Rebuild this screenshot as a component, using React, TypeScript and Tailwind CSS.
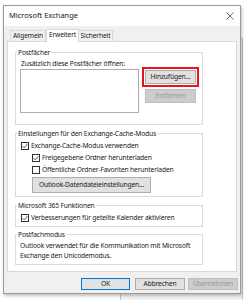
import React from "react";

function Check({ checked }: { checked: boolean }) {
  return (
    <span className="w-[8px] h-[8px] border border-[#333333] bg-white flex items-center justify-center shrink-0">
      {checked && (
        <svg width="6" height="6" viewBox="0 0 6 6">
          <polyline points="0.6,3.2 2.2,4.8 5.4,1" fill="none" stroke="#333333" strokeWidth="0.8" />
        </svg>
      )}
    </span>
  );
}

function Group({ title, className, children }: { title: string; className: string; children?: React.ReactNode }) {
  return (
    <div className={"relative border border-[#dcdcdc] w-[188px] " + className}>
      <span className="absolute left-[1px] top-[-5px] bg-white px-[1px] leading-[9px] whitespace-nowrap">{title}</span>
      {children}
    </div>
  );
}

function Btn({ label, className, disabled }: { label: string; className: string; disabled?: boolean }) {
  return (
    <div
      className={
        "flex items-center justify-center border leading-none whitespace-nowrap " +
        (disabled ? "bg-[#cccccc] border-[#bfbfbf] text-[#9a9a9a] " : "bg-[#e1e1e1] border-[#adadad] ") +
        className
      }
    >
      {label}
    </div>
  );
}

export default function App() {
  return (
    <div className="relative w-[246px] h-[300px] bg-white overflow-hidden font-['Noto_Sans',sans-serif] text-[6.7px] tracking-[-0.15px] text-[#1a1a1a]">
      <div className="absolute left-[120px] top-[38px] w-[123px] h-[270px] border border-[#c4c4c4] bg-[#f4f4f4]" />
      <div className="relative ml-[3px] mt-[5px] w-[238px] h-[289px] border border-[#9a9a9a] bg-[#f0f0f0] flex flex-col shadow-[1px_2px_3px_rgba(0,0,0,0.25)]">
        <div className="h-[20px] bg-white flex items-center justify-between pl-[5px] pr-[5px]">
          <span className="text-[7.5px] tracking-normal leading-none">Microsoft Exchange</span>
          <svg width="8" height="8" viewBox="0 0 8 8" className="mr-[1px]">
            <path d="M0.5 0.5 L7.5 7.5 M7.5 0.5 L0.5 7.5" stroke="#444" strokeWidth="0.8" />
          </svg>
        </div>
        <div className="px-[3px] flex flex-col">
          <div className="h-[15px] flex items-end pl-[3px]">
            <div className="h-[11px] w-[36px] border border-b-0 border-[#d9d9d9] flex items-center justify-center leading-none">Allgemein</div>
            <div className="relative z-10 h-[13px] w-[33px] -mb-px border border-b-0 border-[#d9d9d9] bg-white flex items-center justify-center leading-none pb-[1px]">Erweitert</div>
            <div className="h-[11px] w-[34px] border border-b-0 border-l-0 border-[#d9d9d9] flex items-center justify-center leading-none">Sicherheit</div>
          </div>
          <div className="w-[230px] h-[231px] border border-[#d9d9d9] bg-white flex flex-col pl-[7px] pt-[10px]">
            <Group title="Postfächer" className="h-[73px]">
              <div className="flex items-start pl-[4px] pt-[6px]">
                <div className="w-[119px] flex flex-col">
                  <div className="leading-[9px] whitespace-nowrap pl-[1px]">Zusätzlich diese Postfächer öffnen:</div>
                  <div className="mt-[1px] h-[44px] border border-[#abadb3] bg-white" />
                </div>
                <div className="ml-[3px] mt-[8px] flex flex-col">
                  <div className="w-[57px] h-[20px] border-2 border-[#e5141e] p-[1px]">
                    <Btn label="Hinzufügen..." className="w-[51px] h-[14px]" />
                  </div>
                  <Btn label="Entfernen" disabled className="ml-[3px] mt-[2px] w-[51px] h-[14px]" />
                </div>
              </div>
            </Group>
            <Group title="Einstellungen für den Exchange-Cache-Modus" className="mt-[8px] h-[64px]">
              <div className="flex flex-col pt-[6px]">
                <div className="h-[12px] flex items-center pl-[5px] gap-[2px]">
                  <Check checked />
                  <span className="leading-none whitespace-nowrap">Exchange-Cache-Modus verwenden</span>
                </div>
                <div className="h-[12px] flex items-center pl-[16px] gap-[2px]">
                  <Check checked />
                  <span className="leading-none whitespace-nowrap">Freigegebene Ordner herunterladen</span>
                </div>
                <div className="h-[12px] flex items-center pl-[16px] gap-[2px]">
                  <Check checked={false} />
                  <span className="leading-none whitespace-nowrap">Öffentliche Ordner-Favoriten herunterladen</span>
                </div>
                <Btn label="Outlook-Datendateieinstellungen..." className="ml-[16px] mt-[1px] w-[119px] h-[16px]" />
              </div>
            </Group>
            <Group title="Microsoft 365 Funktionen" className="mt-[8px] h-[22px]">
              <div className="h-[12px] mt-[6px] flex items-center pl-[5px] gap-[2px]">
                <Check checked />
                <span className="leading-none whitespace-nowrap">Verbesserungen für geteilte Kalender aktivieren</span>
              </div>
            </Group>
            <Group title="Postfachmodus" className="mt-[7px] h-[31px]">
              <div className="pt-[6px] pl-[4px] leading-[10px]">
                <div className="whitespace-nowrap">Outlook verwendet für die Kommunikation mit Microsoft</div>
                <div className="whitespace-nowrap">Exchange den Unicodemodus.</div>
              </div>
            </Group>
          </div>
          <div className="mt-[6px] flex justify-end -mr-[1px]">
            <Btn label="OK" className="w-[49px] h-[12px] !border-[#0078d7]" />
            <Btn label="Abbrechen" className="ml-[5px] w-[50px] h-[12px]" />
            <Btn label="Übernehmen" disabled className="ml-[3px] w-[50px] h-[12px]" />
          </div>
        </div>
      </div>
    </div>
  );
}
